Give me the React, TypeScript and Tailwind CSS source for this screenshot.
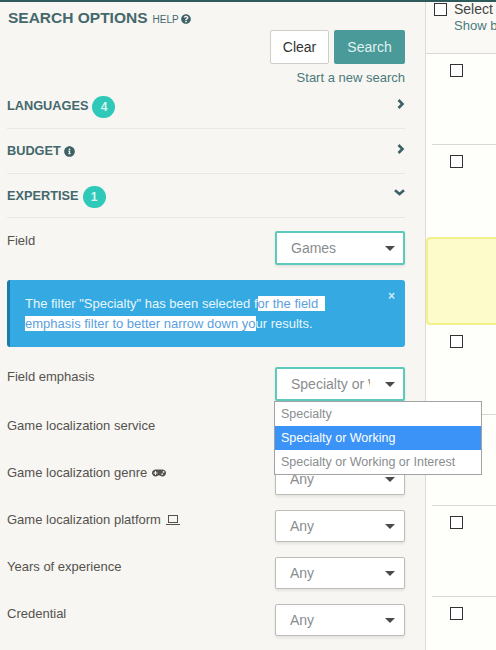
import React from "react";
import { FaQuestionCircle, FaInfoCircle, FaGamepad } from "react-icons/fa";

function Badge({ n }: { n: string }) {
  return (
    <span className="ml-[4px] mt-[2px] flex h-[22px] w-[23px] items-center justify-center rounded-full bg-[#2fc9ba] text-[12px] font-bold text-[#d8f5f1]">{n}</span>
  );
}

function Right({ className }: { className: string }) {
  return (
    <svg width="8" height="10" viewBox="0 0 8 10" fill="none" stroke="#3d6165" strokeWidth="2.6" className={className}>
      <path d="M1.5 1L5.5 5L1.5 9" />
    </svg>
  );
}

function Down({ className }: { className: string }) {
  return (
    <svg width="11" height="7" viewBox="0 0 11 7" fill="none" stroke="#3d6165" strokeWidth="2.6" className={className}>
      <path d="M1 1.2L5.5 5L10 1.2" />
    </svg>
  );
}

function Section({ children, icon, h }: { children: React.ReactNode; icon: React.ReactNode; h: string }) {
  return (
    <div className={`flex items-center justify-between border-b border-[#e8e7e2] ${h}`}>
      <div className="flex items-center text-[12.75px] font-bold text-[#44686c]">{children}</div>
      {icon}
    </div>
  );
}

function Select({ label, active }: { label: string; active?: boolean }) {
  return (
    <div className={`flex w-[130px] items-center justify-between rounded-[2px] bg-white shadow-[0_2px_3px_rgba(0,0,0,0.08)] ${active ? "h-[34px] border-2 border-[#5cc9bd] pl-[14px] pr-[8px]" : "h-[32px] border border-[#bdbcb8] pl-[14px] pr-[9px]"}`}>
      <span className="w-[79px] overflow-hidden whitespace-nowrap text-[14px] text-[#8a8d8f]">{label}</span>
      <span className="h-0 w-0 border-x-[5px] border-t-[5px] border-x-transparent border-t-[#4a4a4a]" />
    </div>
  );
}

function Filter({ label, value, icon, active }: { label: string; value: string; icon?: React.ReactNode; active?: boolean }) {
  return (
    <div className="mb-[15px] flex items-start justify-between">
      <div className="flex items-center gap-[5px] text-[13px] leading-[20px] text-[#55524e]">{label}{icon}</div>
      <Select label={value} active={active} />
    </div>
  );
}

function Check({ className }: { className: string }) {
  return <span className={`block h-[13px] w-[13px] border border-[#333] bg-white ${className}`} />;
}

function Row({ h, check = true, line = true }: { h: string; check?: boolean; line?: boolean }) {
  return (
    <div className={`ml-[6px] pl-[18px] pt-[10px] ${h} ${line ? "border-b border-[#d9d8d3]" : ""}`}>
      {check && <Check className="" />}
    </div>
  );
}

export default function App() {
  return (
    <div className="relative flex h-[650px] w-[496px] overflow-hidden border-t-2 border-[#2f5a5c] bg-[#f7f6f2] font-['Liberation_Sans',Arial,sans-serif]">
      <aside className="w-[426px] shrink-0 border-r border-[#dcdbd6] pl-[7px] pr-[20px]">
        <div className="flex items-baseline pl-[1px] pt-[6px] leading-[20px]">
          <h1 className="text-[15.5px] font-bold text-[#44686c]">SEARCH OPTIONS</h1>
          <span className="ml-[5px] text-[10px] text-[#44686c]">HELP</span>
          <FaQuestionCircle className="ml-[2px] self-center text-[10px] text-[#3d6165]" />
        </div>
        <div className="flex justify-end gap-[5px]">
          <button className="h-[34px] w-[59px] rounded-[2px] border border-[#cfcec9] bg-white text-[14px] text-[#333]">Clear</button>
          <button className="h-[34px] w-[71px] rounded-[2px] bg-[#4b9a9a] text-[14px] text-[#dff3f0]">Search</button>
        </div>
        <div className="mt-[6px] text-right text-[13px] leading-[16px] text-[#4b7a7c]">Start a new search</div>

        <Section h="h-[43px] pb-[2px]" icon={<Right className="mb-[4px]" />}>
          LANGUAGES<Badge n="4" />
        </Section>
        <Section h="h-[45px]" icon={<Right className="mb-[4px]" />}>
          BUDGET<FaInfoCircle className="ml-[3px] text-[11px] text-[#3d6165]" />
        </Section>
        <Section h="h-[44px]" icon={<Down className="mb-[6px]" />}>
          EXPERTISE<Badge n="1" />
        </Section>

        <div className="mt-[13px]">
          <Filter label="Field" value="Games" active />
          <div className="relative mb-[20px] h-[67px] rounded-[3px] border-l-[3px] border-[#1c7aa8] bg-[#35a9e1] pl-[15px] pt-[14px] text-[13px] leading-[20px] text-[#e8f6fd]">
            <div>
              The filter "Specialty" has been selected f<span className="whitespace-pre bg-white text-[#5b9fe0]">or the field  </span>
            </div>
            <div>
              <span className="bg-white text-[#5b9fe0]">emphasis filter to better narrow down yo</span>ur results.
            </div>
            <span className="absolute right-[10px] top-[8px] text-[12px] font-bold leading-[16px] text-[#cfe9f7]">×</span>
          </div>
          <Filter label="Field emphasis" value="Specialty or Working" active />
          <Filter label="Game localization service" value="Any" />
          <Filter label="Game localization genre" value="Any" icon={<FaGamepad className="text-[14px] text-[#55524e]" />} />
          <Filter
            label="Game localization platform"
            value="Any"
            icon={
              <svg width="14" height="12" viewBox="0 0 14 12" fill="none" stroke="#55524e" strokeWidth="1">
                <rect x="2.5" y="1.5" width="9" height="7" />
                <path d="M0 10.5h14" />
              </svg>
            }
          />
          <Filter label="Years of experience" value="Any" />
          <Filter label="Credential" value="Any" />
        </div>
      </aside>

      <main className="min-w-0 flex-1 bg-[#fefefb]">
        <div className="h-[52px] border-b border-[#d9d8d3] bg-[#faf9f6] pl-[8px]">
          <div className="flex items-start gap-[7px] text-[14px] leading-[14px] text-[#444]">
            <Check className="mt-[1px] shrink-0" />
            <span>Select</span>
          </div>
          <div className="mt-[2px] whitespace-nowrap pl-[20px] text-[13px] leading-[16px] text-[#4b7a7c]">Show b</div>
        </div>
        <Row h="h-[91px]" />
        <Row h="h-[92px]" line={false} />
        <div className="h-[88px] rounded-l-[4px] border-2 border-r-0 border-[#f4f08a] bg-[#fdfbc9]" />
        <Row h="h-[90px]" />
        <Row h="h-[91px]" check={false} />
        <Row h="h-[91px]" />
        <Row h="h-[53px]" line={false} />
      </main>

      <div className="absolute left-[274px] top-[399px] z-10 w-[208px] border border-[#a3a3a3] bg-white text-[12.5px] leading-[23px] text-[#8a8d8f]">
        <div className="h-[24px] pl-[6px] pt-[1px]">Specialty</div>
        <div className="h-[24px] bg-[#3b93f7] pl-[6px] pt-[1px] text-white">Specialty or Working</div>
        <div className="h-[24px] pl-[6px] pt-[1px]">Specialty or Working or Interest</div>
      </div>
    </div>
  );
}
